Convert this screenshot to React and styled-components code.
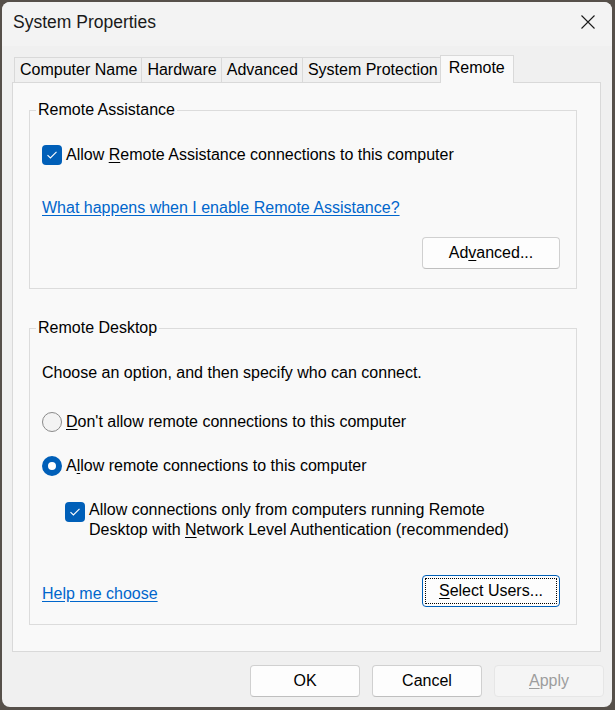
import styled, { createGlobalStyle } from "styled-components";

const GlobalStyle = createGlobalStyle`
  html, body {
    margin: 0;
    padding: 0;
    background: #56504a;
  }
  body {
    font-family: "Liberation Sans", Arial, sans-serif;
    font-size: 16px;
    color: #000;
  }
`;

const Window = styled.div`
  box-sizing: border-box;
  margin: 2px 0 0 2px;
  width: 610px;
  height: 705px;
  background: #f0f0f0;
  border-radius: 8px;
  display: flex;
  flex-direction: column;
  overflow: hidden;
`;

const TitleBar = styled.div`
  height: 44px;
  flex: 0 0 44px;
  display: flex;
  align-items: center;
  justify-content: space-between;
  padding: 0 16px 0 11px;
  background: #f3f3f3;
`;

const Title = styled.span`
  font-size: 17.5px;
  color: #1a1a1a;
  margin-top: -4px;
`;

const CloseIcon = styled.svg`
  width: 16px;
  height: 16px;
  margin-top: -4px;
`;

const Body = styled.div`
  flex: 1;
  display: flex;
  flex-direction: column;
  padding: 9px 0 0 10px;
`;

const TabStrip = styled.div`
  display: flex;
  align-items: flex-end;
  height: 28px;
  padding-left: 2px;
  margin-bottom: -1px;
`;

const Tab = styled.div`
  box-sizing: border-box;
  height: ${(p) => (p.$active ? "28px" : "26px")};
  padding: ${(p) => (p.$active ? "0 8px 3px" : "0 4px 0 5px")};
  margin: ${(p) => (p.$active ? "0 -2px" : "0")};
  display: flex;
  align-items: center;
  border: 1px solid #d9d9d9;
  border-right-width: ${(p) => (p.$last ? "1px" : "0")};
  border-bottom: ${(p) => (p.$active ? "none" : "1px solid #d9d9d9")};
  background: ${(p) => (p.$active ? "#f9f9f9" : "#f0f0f0")};
  position: relative;
  z-index: ${(p) => (p.$active ? 2 : 1)};
  white-space: nowrap;
`;

const Panel = styled.div`
  box-sizing: border-box;
  height: 570px;
  margin-right: 11px;
  border: 1px solid #d9d9d9;
  background: #f9f9f9;
  padding: 18px 23px 0 16px;
`;

const Group = styled.fieldset`
  margin: 0 0 ${(p) => p.$gap || 0}px;
  padding: 0 16px ${(p) => p.$bottom}px 12px;
  border: 1px solid #dcdcdc;
  min-width: 0;
`;

const Legend = styled.legend`
  margin-left: -6px;
  padding: 0 2px;
  line-height: 18px;
`;

const Row = styled.div`
  display: flex;
  align-items: ${(p) => (p.$top ? "flex-start" : "center")};
  margin-top: ${(p) => p.$mt}px;
  margin-left: ${(p) => p.$indent || 0}px;
  gap: 4px;
`;

const Text = styled.span`
  line-height: ${(p) => p.$lh || 18}px;
  white-space: nowrap;
`;

const Paragraph = styled.div`
  margin-top: ${(p) => p.$mt}px;
  line-height: 18px;
`;

const Key = styled.u`
  text-decoration: underline;
  text-underline-offset: 2px;
`;

const Link = styled.a`
  color: #0066cc;
  text-decoration: underline;
  text-underline-offset: 2px;
  line-height: 18px;
  margin-top: ${(p) => p.$mt || 0}px;
  cursor: pointer;
`;

const LinkLine = styled.div`
  margin-top: ${(p) => p.$mt}px;
`;

const Box = styled.span`
  box-sizing: border-box;
  flex: 0 0 20px;
  width: 20px;
  height: 20px;
  border-radius: 4px;
  background: #005fb8;
  display: inline-flex;
  align-items: center;
  justify-content: center;
  margin-top: ${(p) => p.$mt || 0}px;
`;

const Radio = styled.span`
  box-sizing: border-box;
  flex: 0 0 20px;
  width: 20px;
  height: 20px;
  border-radius: 50%;
  border: ${(p) => (p.$on ? "6px solid #005fb8" : "1px solid #8a8a8a")};
  background: ${(p) => (p.$on ? "#fff" : "#f3f3f3")};
`;

const ButtonRow = styled.div`
  display: flex;
  justify-content: ${(p) => p.$justify || "flex-end"};
  align-items: center;
  margin-top: ${(p) => p.$mt}px;
`;

const Button = styled.button`
  box-sizing: border-box;
  width: ${(p) => p.$w}px;
  height: 32px;
  font-family: inherit;
  font-size: 16px;
  color: ${(p) => (p.disabled ? "#9d9d9d" : "#000")};
  background: ${(p) => (p.disabled ? "#f5f5f5" : "#fdfdfd")};
  border: 1px solid ${(p) => (p.$focus ? "#005fb8" : p.disabled ? "#e6e6e6" : "#d0d0d0")};
  border-bottom-color: ${(p) => (p.$focus ? "#005fb8" : p.disabled ? "#e6e6e6" : "#bfbfbf")};
  border-radius: 4px;
  padding: 0;
  outline: ${(p) => (p.$focus ? "1px dotted #000" : "none")};
  outline-offset: -4px;
`;

const Footer = styled.div`
  display: flex;
  justify-content: flex-end;
  gap: 12px;
  padding: 13px 8px 0 0;
`;

const Check = () => (
  <svg width="12" height="10" viewBox="0 0 12 10">
    <path d="M1.5 5.2 L4.4 8 L10.5 1.8" fill="none" stroke="#fff" strokeWidth="1.1" />
  </svg>
);

const tabs = ["Computer Name", "Hardware", "Advanced", "System Protection", "Remote"];

export default function App() {
  return (
    <>
      <GlobalStyle />
      <Window>
        <TitleBar>
          <Title>System Properties</Title>
          <CloseIcon viewBox="0 0 16 16">
            <path d="M1.5 1.5 L14.5 14.5 M14.5 1.5 L1.5 14.5" stroke="#1a1a1a" strokeWidth="1.1" fill="none" />
          </CloseIcon>
        </TitleBar>
        <Body>
          <TabStrip>
            {tabs.map((t, i) => (
              <Tab key={t} $active={t === "Remote"} $last={i === tabs.length - 1}>
                {t}
              </Tab>
            ))}
          </TabStrip>
          <Panel>
            <Group $bottom={19} $gap={30}>
              <Legend>Remote Assistance</Legend>
              <Row $mt={26}>
                <Box>
                  <Check />
                </Box>
                <Text>
                  Allow <Key>R</Key>emote Assistance connections to this computer
                </Text>
              </Row>
              <LinkLine $mt={34}>
                <Link>What happens when I enable Remote Assistance?</Link>
              </LinkLine>
              <ButtonRow $mt={20}>
                <Button $w={138}>
                  Ad<Key>v</Key>anced...
                </Button>
              </ButtonRow>
            </Group>
            <Group $bottom={17}>
              <Legend>Remote Desktop</Legend>
              <Paragraph $mt={27}>Choose an option, and then specify who can connect.</Paragraph>
              <Row $mt={30}>
                <Radio />
                <Text>
                  <Key>D</Key>on't allow remote connections to this computer
                </Text>
              </Row>
              <Row $mt={24}>
                <Radio $on />
                <Text>
                  A<Key>l</Key>low remote connections to this computer
                </Text>
              </Row>
              <Row $mt={24} $indent={23} $top>
                <Box $mt={2}>
                  <Check />
                </Box>
                <Text $lh={20}>
                  Allow connections only from computers running Remote
                  <br />
                  Desktop with <Key>N</Key>etwork Level Authentication (recommended)
                </Text>
              </Row>
              <ButtonRow $mt={35} $justify="space-between">
                <Link $mt={6}>Help me choose</Link>
                <Button $w={138} $focus>
                  <Key>S</Key>elect Users...
                </Button>
              </ButtonRow>
            </Group>
          </Panel>
          <Footer>
            <Button $w={110}>OK</Button>
            <Button $w={110}>Cancel</Button>
            <Button $w={110} disabled>
              <Key>A</Key>pply
            </Button>
          </Footer>
        </Body>
      </Window>
    </>
  );
}
